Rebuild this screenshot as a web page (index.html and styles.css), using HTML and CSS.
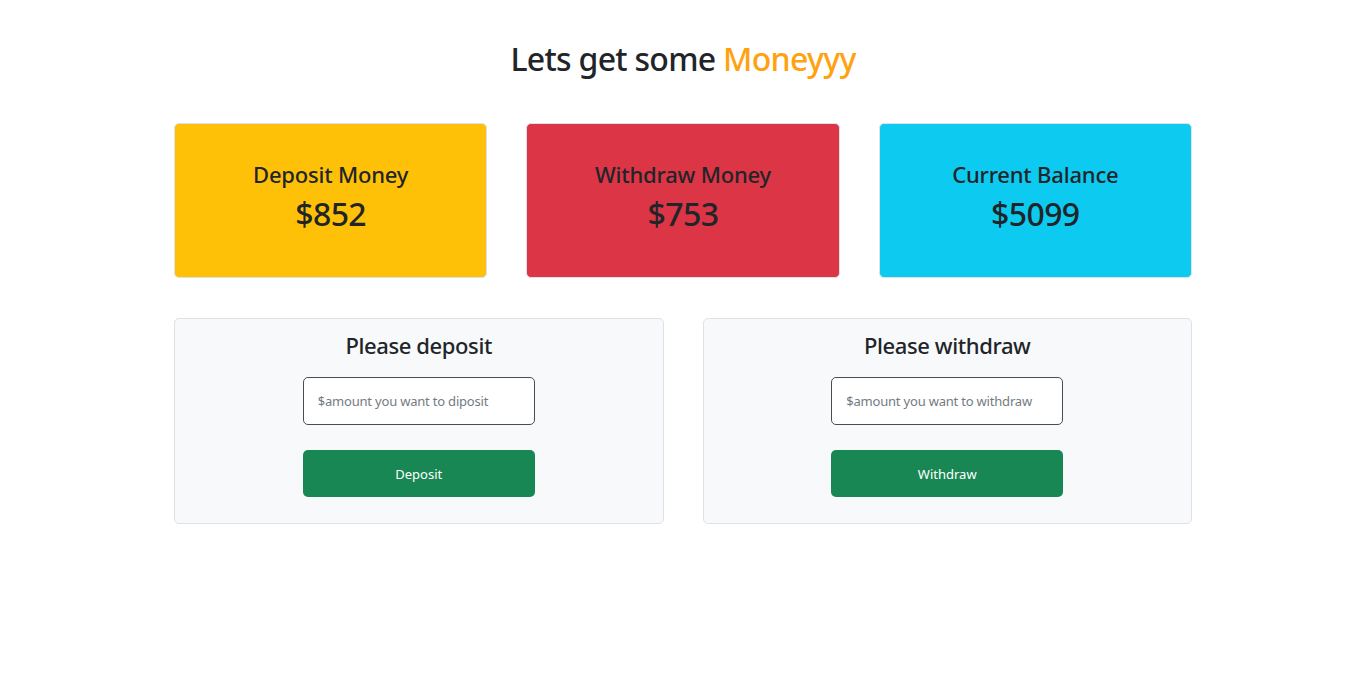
FILE: index.html
```html
<!DOCTYPE html>
<html lang="en">
<head>
<meta charset="utf-8">
<title>Bank</title>
<link rel="stylesheet" href="styles.css">
</head>
<body>
<main class="page">
  <h1 class="headline">Lets get some <span class="accent">Moneyyy</span></h1>
  <section class="stats">
    <div class="stat stat-warning">
      <h4 class="stat-title">Deposit Money</h4>
      <h2 class="stat-value">$852</h2>
    </div>
    <div class="stat stat-danger">
      <h4 class="stat-title">Withdraw Money</h4>
      <h2 class="stat-value">$753</h2>
    </div>
    <div class="stat stat-info">
      <h4 class="stat-title">Current Balance</h4>
      <h2 class="stat-value">$5099</h2>
    </div>
  </section>
  <section class="forms">
    <div class="panel">
      <h4 class="panel-title">Please deposit</h4>
      <input class="field" type="text" placeholder="$amount you want to diposit">
      <button class="btn">Deposit</button>
    </div>
    <div class="panel">
      <h4 class="panel-title">Please withdraw</h4>
      <input class="field" type="text" placeholder="$amount you want to withdraw">
      <button class="btn">Withdraw</button>
    </div>
  </section>
</main>
</body>
</html>
```
FILE: styles.css
```css
* { box-sizing: border-box; }
html, body { margin: 0; padding: 0; background: #fff; }
body {
  font-family: "Noto Sans", "Open Sans", "DejaVu Sans", sans-serif;
  color: #212529;
}
.page {
  width: 1018px;
  margin: 0 auto;
  padding-top: 40px;
  display: flex;
  flex-direction: column;
}
.headline {
  margin: 0;
  font-size: 32px;
  line-height: 38px;
  font-weight: 500;
  letter-spacing: -0.7px;
  text-align: center;
}
.accent { color: #ffa20f; }
.stats {
  margin-top: 45px;
  display: flex;
  gap: 39px;
}
.stat {
  flex: 1;
  height: 155px;
  border: 1px solid #dee2e6;
  border-radius: 5px;
  display: flex;
  flex-direction: column;
  align-items: center;
  padding-top: 36px;
}
.stat-warning { background: #ffc107; }
.stat-danger { background: #dc3545; }
.stat-info { background: #0dcaf0; }
.stat-title {
  margin: 0;
  font-size: 22px;
  line-height: 29px;
  font-weight: 500;
  letter-spacing: -0.2px;
}
.stat-value {
  margin: 6px 0 0;
  font-size: 32px;
  line-height: 38px;
  font-weight: 500;
  letter-spacing: -0.6px;
}
.forms {
  margin-top: 40px;
  display: flex;
  gap: 39px;
}
.panel {
  flex: 1;
  height: 206px;
  background: #f8f9fa;
  border: 1px solid #dee2e6;
  border-radius: 5px;
  display: flex;
  flex-direction: column;
  align-items: center;
  padding-top: 12px;
}
.panel-title {
  margin: 0;
  font-size: 22px;
  line-height: 29px;
  font-weight: 500;
  letter-spacing: -0.4px;
}
.field {
  margin-top: 17px;
  width: 232px;
  height: 48px;
  border: 1px solid #4a4d50;
  border-radius: 5px;
  padding: 0 14px;
  font-family: inherit;
  font-size: 13px;
  letter-spacing: -0.2px;
  color: #212529;
  background: #fff;
  outline: none;
}
.field::placeholder { color: #747b82; }
.btn {
  margin-top: 25px;
  width: 232px;
  height: 47px;
  border: none;
  border-radius: 5px;
  background: #198754;
  color: #fff;
  font-family: inherit;
  font-size: 13px;
  cursor: pointer;
}
```
